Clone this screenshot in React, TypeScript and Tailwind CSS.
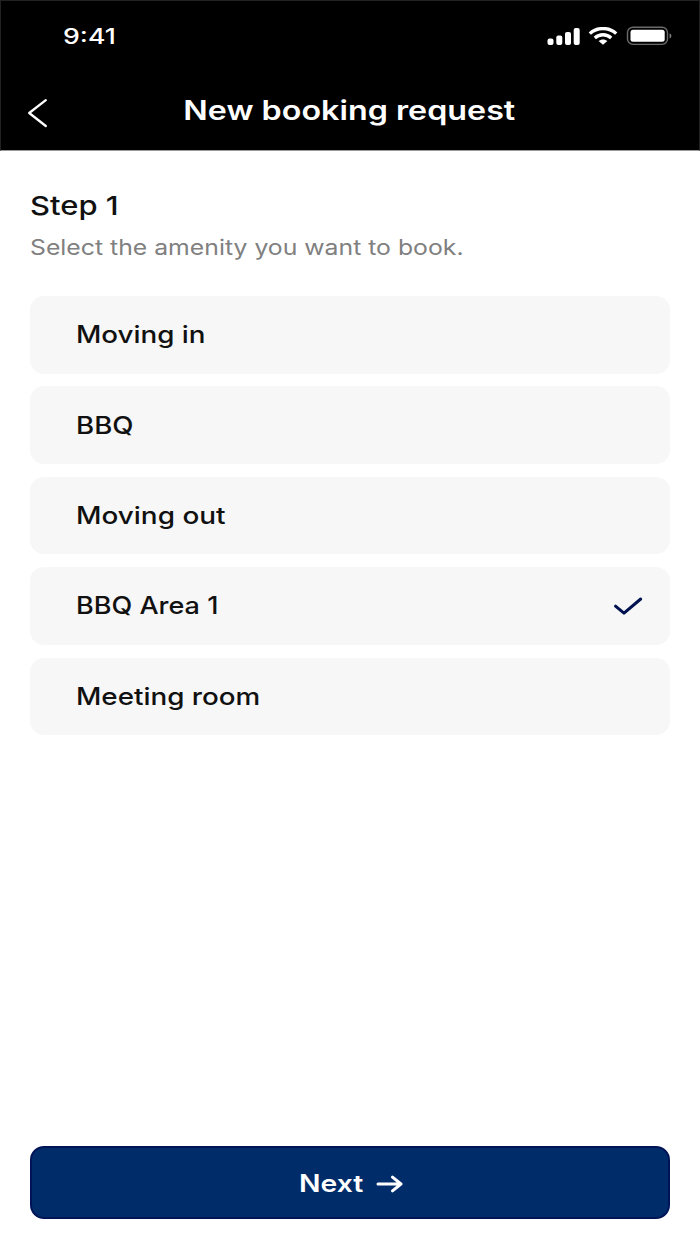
import clsx from "clsx";

interface AmenityItemProps {
  label: string;
  textClass: string;
  selected: boolean;
}

const amenities = [
  { label: "Moving in", textClass: "scale-x-[1.157]" },
  { label: "BBQ", textClass: "scale-x-[1.15]" },
  { label: "Moving out", textClass: "scale-x-[1.163]" },
  { label: "BBQ Area 1", textClass: "scale-x-[1.125]" },
  { label: "Meeting room", textClass: "scale-x-[1.158]" },
];

function StatusBar() {
  return (
    <div className="flex h-[70px] items-center justify-between pl-[62px] pr-[27px]">
      <span className="origin-left scale-x-[1.27] pt-[2px] text-[21px] leading-6 font-medium">
        9:41
      </span>
      <div className="flex items-center">
        <svg width="33" height="17" viewBox="0 0 33 17" fill="white">
          <rect x="0.5" y="10.5" width="6" height="6.5" rx="2" />
          <rect x="9.3" y="7.5" width="6" height="9.5" rx="2" />
          <rect x="18" y="4" width="6" height="13" rx="2" />
          <rect x="26.7" y="0" width="6" height="17" rx="2" />
        </svg>
        <svg
          className="ml-[8px]"
          width="30"
          height="18"
          viewBox="0 0 30 18"
          fill="none"
          stroke="white"
          strokeWidth="3.3"
        >
          <path d="M1.8 6.6C9 -.2 21 -.2 28.2 6.6" />
          <path d="M6.8 10.9C11.5 6.7 18.5 6.7 23.2 10.9" />
          <path d="M10.6 14C13 11.9 17 11.9 19.4 14L15 17.8Z" fill="white" stroke="none" />
        </svg>
        <svg className="ml-[8px]" width="46" height="20" viewBox="0 0 46 20">
          <rect
            x="1.5"
            y="1.2"
            width="40"
            height="17.2"
            rx="5.5"
            fill="none"
            stroke="#6b6b6b"
            strokeWidth="1.4"
          />
          <rect x="4.5" y="3.8" width="34.2" height="12" rx="2.5" fill="white" />
          <path d="M43.6 7.2C45.9 8 45.9 11.6 43.6 12.4Z" fill="#808080" />
        </svg>
      </div>
    </div>
  );
}

function Header() {
  return (
    <header className="h-[151px] border border-[#222222] border-b-[#9a9a9a] bg-black text-white">
      <StatusBar />
      <div className="grid h-[79px] grid-cols-[80px_1fr_80px] items-center">
        <button aria-label="Back" className="pt-[4px] pl-[26px]">
          <svg
            width="22"
            height="30"
            viewBox="0 0 22 30"
            fill="none"
            stroke="white"
            strokeWidth="2.3"
            strokeLinecap="round"
            strokeLinejoin="round"
          >
            <path d="M18.8 2.2L2.2 15L18.8 28" />
          </svg>
        </button>
        <h1 className="flex justify-center pr-[2px] pb-[2px] text-[26.5px] leading-8 font-semibold whitespace-nowrap">
          <span className="scale-x-[1.218]">New booking request</span>
        </h1>
      </div>
    </header>
  );
}

function AmenityItem({ label, textClass, selected }: AmenityItemProps) {
  return (
    <li className="flex h-[77.5px] items-center justify-between rounded-[14px] bg-[#f7f7f7] pr-[27px] pl-[45.5px] text-[#111111]">
      <span className={clsx("origin-left pt-[1px] text-[24px] leading-8 font-medium", textClass)}>
        {label}
      </span>
      {selected && (
        <svg
          className="mt-[1px]"
          width="30"
          height="20"
          viewBox="0 0 30 20"
          fill="none"
          stroke="#001350"
          strokeWidth="3"
          strokeLinecap="round"
          strokeLinejoin="round"
        >
          <path d="M2.5 10.2L11 17.2L27.7 3" />
        </svg>
      )}
    </li>
  );
}

function App() {
  return (
    <div
      className="flex h-[1244px] w-[700px] flex-col bg-white"
      style={{ fontFamily: 'Inter, "Liberation Sans", sans-serif' }}
    >
      <Header />
      <main className="flex flex-1 flex-col items-start px-[30px] pt-[39px]">
        <h2 className="origin-left scale-x-[1.19] text-[26px] leading-8 font-medium text-[#111111]">
          Step 1
        </h2>
        <p className="mt-[12px] origin-left scale-x-[1.18] text-[21px] leading-7 whitespace-nowrap text-[#808080]">
          Select the amenity you want to book.
        </p>
        <ul className="mt-[34px] flex w-full flex-col gap-[12.9px]">
          {amenities.map((amenity) => (
            <AmenityItem
              key={amenity.label}
              {...amenity}
              selected={amenity.label === "BBQ Area 1"}
            />
          ))}
        </ul>
      </main>
      <footer className="px-[30px] pb-[25px]">
        <button className="flex h-[73px] w-full items-center rounded-[14px] border-2 border-[#001558] bg-[#002d6a] pl-[267px] text-white">
          <span className="w-[77px] pt-[2px] text-left text-[24px] leading-8 font-semibold">
            <span className="inline-block origin-left scale-x-[1.18]">Next</span>
          </span>
          <svg
            className="mt-[2px]"
            width="27"
            height="18"
            viewBox="0 0 27 18"
            fill="none"
            stroke="white"
            strokeWidth="3"
            strokeLinecap="round"
            strokeLinejoin="round"
          >
            <path d="M2 9H25M16.5 2.2L25 9L16.5 15.8" />
          </svg>
        </button>
      </footer>
    </div>
  );
}

export default App;
